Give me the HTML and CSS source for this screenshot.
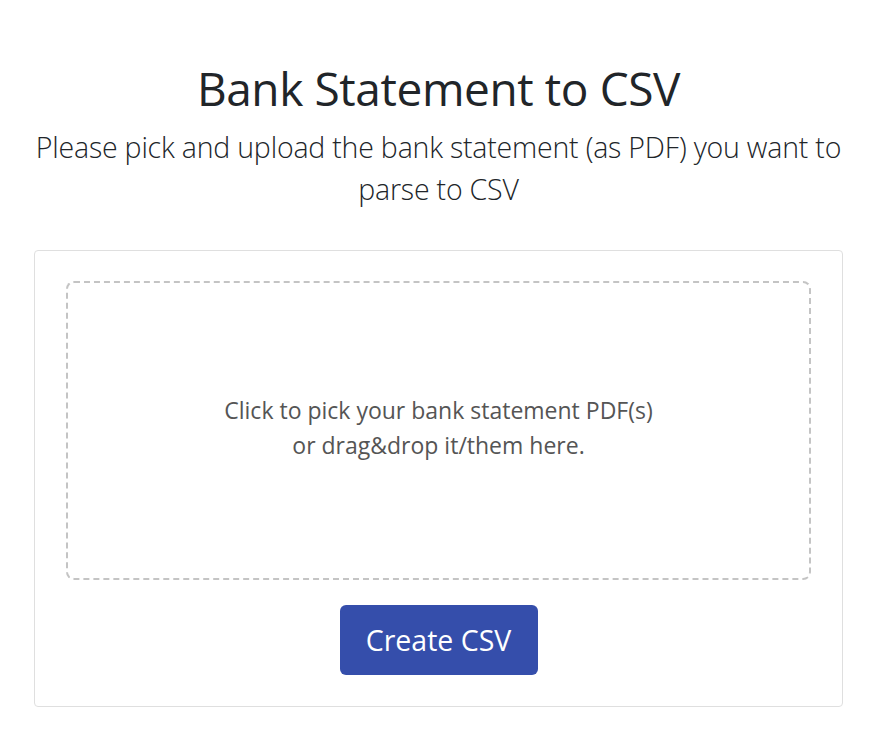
FILE: index.html
```html
<!DOCTYPE html>
<html lang="en">
  <head>
    <meta charset="UTF-8" />
    <meta name="viewport" content="width=device-width, initial-scale=1.0" />
    <title>Bank Statement to CSV</title>
    <link rel="stylesheet" href="styles.css">
  </head>
  <body>
    <div class="page">
      <h1 class="title">Bank Statement to CSV</h1>
      <p class="lead">Please pick and upload the bank statement (as PDF) you want to parse to CSV</p>

      <div class="card">
        <div class="dropzone">
          <div>Click to pick your bank statement PDF(s)</div>
          <div>or drag&amp;drop it/them here.</div>
        </div>
        <button class="btn">Create CSV</button>
      </div>
    </div>
  </body>
</html>
```

FILE: styles.css
```css
body {
  margin: 0;
  font-family: "Open Sans", "Noto Sans", sans-serif;
  color: #212529;
  background: #fff;
}
.page {
  padding: 59px 33px 0 34px;
}
.title {
  margin: 0;
  text-align: center;
  font-size: 46px;
  font-weight: 400;
  line-height: 58px;
  letter-spacing: -0.4px;
}
.lead {
  margin: 9px 0 0;
  text-align: center;
  font-size: 28.5px;
  font-weight: 300;
  line-height: 42px;
  letter-spacing: -0.2px;
}
.card {
  margin-top: 40px;
  border: 1px solid #dfdfdf;
  border-radius: 4px;
  padding: 30px 31px 31px;
  display: flex;
  flex-direction: column;
  align-items: center;
}
.dropzone {
  box-sizing: border-box;
  width: 100%;
  height: 299px;
  padding-bottom: 5px;
  border: 2px dashed #c4c4c4;
  border-radius: 8px;
  display: flex;
  flex-direction: column;
  justify-content: center;
  align-items: center;
  font-size: 23px;
  line-height: 35px;
  color: #555;
}
.btn {
  margin-top: 25px;
  width: 198px;
  height: 70px;
  border: 0;
  border-radius: 6px;
  background: #354eab;
  color: #fff;
  font-family: inherit;
  font-size: 28.5px;
  cursor: pointer;
}
```
